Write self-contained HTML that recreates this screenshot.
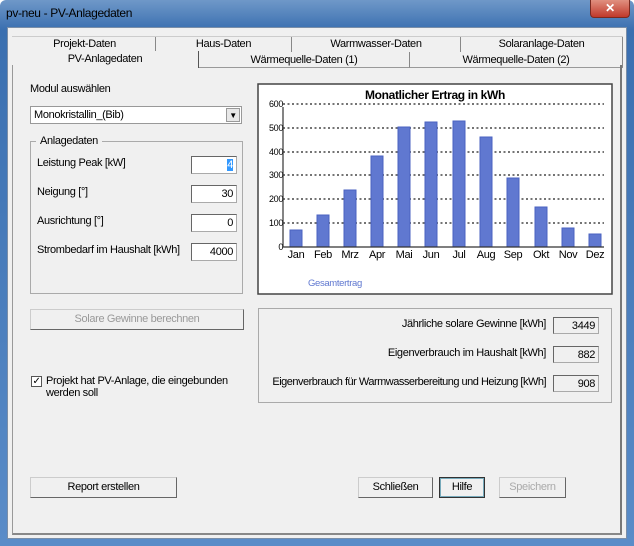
<!DOCTYPE html>
<html><head><meta charset="utf-8"><style>
*{margin:0;padding:0;box-sizing:border-box}
body{width:634px;height:546px;overflow:hidden;font-family:"Liberation Sans",sans-serif;font-size:11px;letter-spacing:-0.35px;color:#000;background:#fff}
.a{position:absolute;white-space:nowrap}
.win{left:0;top:0;width:634px;height:546px;background:linear-gradient(#6f98c8,#3a6fb0 30px,#5a8cc8);border-radius:6px 6px 0 0}
.client{left:7px;top:27px;width:620px;height:512px;background:#f0f0f0;border:1px solid #7a8ea8}
.tab{height:16px;border-right:1px solid #888;text-align:center;line-height:16px;background:#f0f0f0}
.panel{left:12px;top:65px;width:610px;height:470px;border:1px solid #999;border-top:none;border-right:2px solid #777;border-bottom:2px solid #888}
.tb{background:#fff;border:1px solid #aaa;border-top-color:#666;border-left-color:#666;text-align:right;padding-right:3px;line-height:17px;height:18px}
.ro{background:#f0f0f0;border:1px solid #aaa;border-top-color:#666;border-left-color:#666;text-align:right;padding-right:3px;line-height:16px;height:17px}
.btn{background:#f0f0f0;border:1px solid #ccc;border-right-color:#666;border-bottom-color:#666;text-align:center;line-height:19px;height:21px}
.grp{border:1px solid #aaa}
</style></head><body>
<div class="a win"></div>
<div class="a" style="left:6px;top:6px;color:#000;font-size:12px">pv-neu - PV-Anlagedaten</div>
<div class="a" style="left:590px;top:0;width:40px;height:18px;background:linear-gradient(#e09080,#c0392b);border:1px solid #7a2a20;border-top:none;border-radius:0 0 4px 4px;color:#fff;font-weight:bold;text-align:center;line-height:17px;font-size:12px">✕</div>
<div class="a client"></div>
<div class="a tab" style="left:14px;top:36px;width:142px">Projekt-Daten</div>
<div class="a tab" style="left:156px;top:36px;width:136px">Haus-Daten</div>
<div class="a tab" style="left:292px;top:36px;width:169px">Warmwasser-Daten</div>
<div class="a tab" style="left:461px;top:36px;width:162px">Solaranlage-Daten</div>
<div class="a tab" style="left:12px;top:51px;width:187px;border-right:1px solid #555;height:17px">PV-Anlagedaten</div>
<div class="a tab" style="left:199px;top:52px;width:211px;border-bottom:1px solid #999">Wärmequelle-Daten (1)</div>
<div class="a tab" style="left:410px;top:52px;width:213px;border-bottom:1px solid #999">Wärmequelle-Daten (2)</div>
<div class="a" style="left:12px;top:36px;width:611px;height:1px;background:#ccc"></div>
<div class="a panel"></div>

<div class="a" style="left:30px;top:83px">Modul auswählen</div>
<div class="a" style="left:30px;top:106px;width:212px;height:18px;background:#fff;border:1px solid #999;padding-left:3px;line-height:16px">Monokristallin_(Bib)</div>
<div class="a" style="left:226px;top:108px;width:14px;height:14px;background:#e8e8e8;border:1px solid #999;font-size:8px;text-align:center;line-height:13px">▼</div>

<div class="a grp" style="left:30px;top:141px;width:213px;height:153px"></div>
<div class="a" style="left:36px;top:135px;background:#f0f0f0;padding:0 4px">Anlagedaten</div>
<div class="a" style="left:37px;top:157px">Leistung Peak [kW]</div>
<div class="a" style="left:37px;top:186px">Neigung [°]</div>
<div class="a" style="left:37px;top:215px">Ausrichtung [°]</div>
<div class="a" style="left:37px;top:244px">Strombedarf im Haushalt [kWh]</div>
<div class="a tb" style="left:191px;top:156px;width:46px"><span style="background:#3399ff;color:#fff">4</span></div>
<div class="a tb" style="left:191px;top:185px;width:46px">30</div>
<div class="a tb" style="left:191px;top:214px;width:46px">0</div>
<div class="a tb" style="left:191px;top:243px;width:46px">4000</div>

<div class="a btn" style="left:30px;top:309px;width:214px;color:#999">Solare Gewinne berechnen</div>

<div class="a" style="left:31px;top:376px;width:11px;height:11px;border:1px solid #555;background:#fff;font-size:10px;line-height:9px;text-align:center">✓</div>
<div class="a" style="left:46px;top:375px;line-height:12px">Projekt hat PV-Anlage, die eingebunden<br>werden soll</div>

<svg class="a" style="left:257px;top:83px" width="357" height="213" viewBox="257 83 357 213">
<rect x="258" y="84" width="354" height="210" fill="#fff" stroke="#444" stroke-width="1.5"/>
<text x="435" y="99" text-anchor="middle" font-family="Liberation Sans" font-weight="bold" font-size="12">Monatlicher Ertrag in kWh</text>
<g stroke="#222" stroke-width="1.3" stroke-dasharray="2,2.5">
<line x1="283" x2="604" y1="104" y2="104"/><line x1="283" x2="604" y1="128" y2="128"/><line x1="283" x2="604" y1="152" y2="152"/><line x1="283" x2="604" y1="175" y2="175"/><line x1="283" x2="604" y1="199" y2="199"/><line x1="283" x2="604" y1="223" y2="223"/>
</g>
<g font-family="Liberation Sans" font-size="9" text-anchor="end">
<text x="283" y="107">600</text><text x="283" y="131">500</text><text x="283" y="155">400</text><text x="283" y="178">300</text><text x="283" y="202">200</text><text x="283" y="226">100</text><text x="283" y="250">0</text>
</g>
<g fill="#6078d0" stroke="#4a62c0" stroke-width="1">
<rect x="290" y="230" width="12" height="17"/>
<rect x="317" y="215" width="12" height="32"/>
<rect x="344" y="190" width="12" height="57"/>
<rect x="371" y="156" width="12" height="91"/>
<rect x="398" y="127" width="12" height="120"/>
<rect x="425" y="122" width="12" height="125"/>
<rect x="453" y="121" width="12" height="126"/>
<rect x="480" y="137" width="12" height="110"/>
<rect x="507" y="178" width="12" height="69"/>
<rect x="535" y="207" width="12" height="40"/>
<rect x="562" y="228" width="12" height="19"/>
<rect x="589" y="234" width="12" height="13"/>
</g>
<line x1="283" y1="107" x2="283" y2="247" stroke="#333" stroke-width="1.2"/>
<line x1="283" y1="247" x2="604" y2="247" stroke="#333" stroke-width="1.2"/>
<g font-family="Liberation Sans" font-size="11" text-anchor="middle">
<text x="296" y="258">Jan</text><text x="323" y="258">Feb</text><text x="350" y="258">Mrz</text><text x="377" y="258">Apr</text><text x="404" y="258">Mai</text><text x="431" y="258">Jun</text><text x="459" y="258">Jul</text><text x="486" y="258">Aug</text><text x="513" y="258">Sep</text><text x="541" y="258">Okt</text><text x="568" y="258">Nov</text><text x="595" y="258">Dez</text>
</g>
<text x="308" y="286" font-family="Liberation Sans" font-size="9.5" fill="#6078d0">Gesamtertrag</text>
</svg>

<div class="a grp" style="left:258px;top:308px;width:354px;height:95px"></div>
<div class="a" style="left:260px;top:318px;width:286px;text-align:right">Jährliche solare Gewinne [kWh]</div>
<div class="a" style="left:260px;top:347px;width:286px;text-align:right">Eigenverbrauch im Haushalt [kWh]</div>
<div class="a" style="left:260px;top:376px;width:286px;text-align:right;letter-spacing:-0.5px">Eigenverbrauch für Warmwasserbereitung und Heizung [kWh]</div>
<div class="a ro" style="left:553px;top:317px;width:46px">3449</div>
<div class="a ro" style="left:553px;top:346px;width:46px">882</div>
<div class="a ro" style="left:553px;top:375px;width:46px">908</div>

<div class="a btn" style="left:30px;top:477px;width:147px">Report erstellen</div>
<div class="a btn" style="left:358px;top:477px;width:75px">Schließen</div>
<div class="a btn" style="left:439px;top:477px;width:46px;border:1px solid #333;box-shadow:inset 0 0 0 1px #7ab">Hilfe</div>
<div class="a btn" style="left:499px;top:477px;width:67px;color:#aaa">Speichern</div>
</body></html>
